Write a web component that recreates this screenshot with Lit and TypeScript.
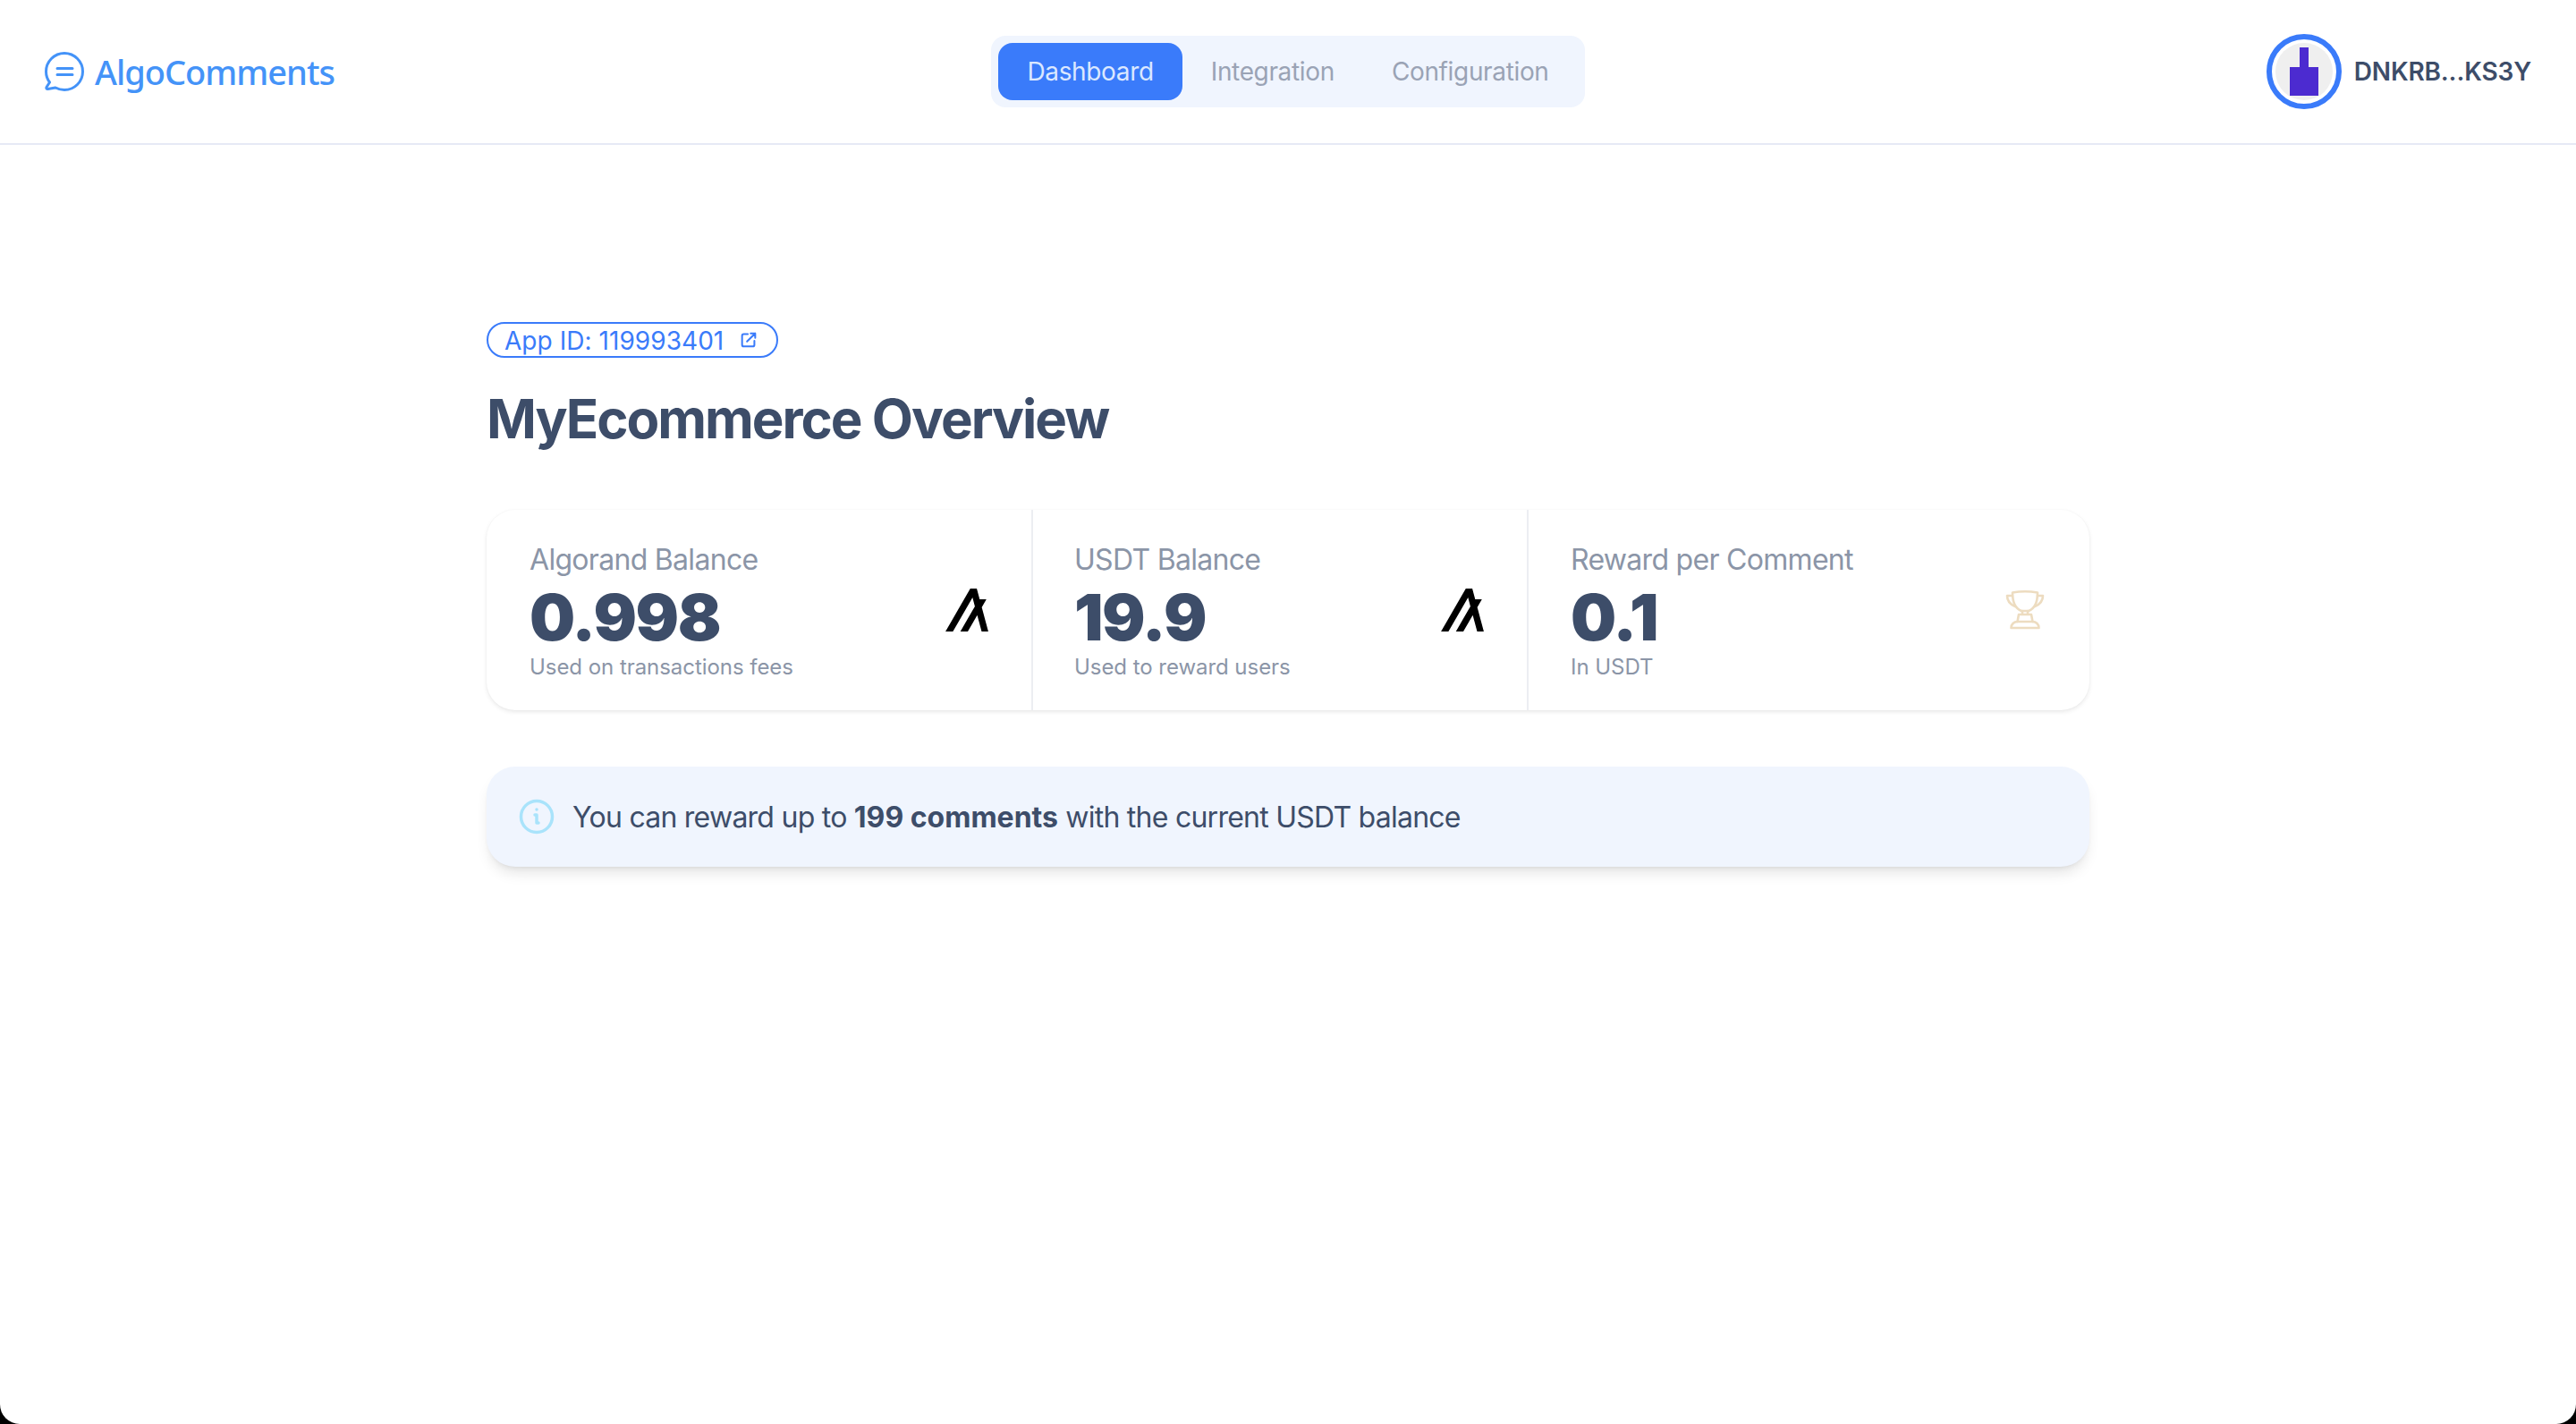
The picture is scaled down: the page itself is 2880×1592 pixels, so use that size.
import { LitElement, html, css, svg } from 'lit';
import { customElement } from 'lit/decorators.js';

const algoIcon = svg`<polygon points="19.6 113.4 36 85 52.4 56.7 68.7 28.3 71.4 23.8 72.6 28.3 77.6 47 72 56.7 55.6 85 39.3 113.4 58.9 113.4 75.3 85 83.8 70.3 87.8 85 95.4 113.4 113 113.4 105.4 85 97.8 56.7 95.8 49.4 108 28.3 90.2 28.3 89.6 26.2 83.4 3 82.6 0 65.5 0 65.1 .6 49.1 28.3 32.7 56.7 16.4 85 0 113.4 19.6 113.4"/>`;

const stats = [
  { title: 'Algorand Balance', value: '0.998', desc: 'Used on transactions fees', icon: 'algo' },
  { title: 'USDT Balance', value: '19.9', desc: 'Used to reward users', icon: 'algo' },
  { title: 'Reward per Comment', value: '0.1', desc: 'In USDT', icon: 'trophy' },
];

@customElement('app-root')
export class AppRoot extends LitElement {
  static styles = css`
    :host {
      display: block;
      background: #000;
      font-family: Inter, 'Liberation Sans', sans-serif;
      color: #3d4d69;
    }
    .page {
      background: #fff;
      min-height: 1592px;
      border-radius: 0 0 22px 22px;
      box-sizing: border-box;
    }
    header {
      height: 162px;
      box-sizing: border-box;
      border-bottom: 2px solid #e6e9f5;
      padding: 0 50px;
      display: grid;
      grid-template-columns: 1fr auto 1fr;
      align-items: center;
    }
    .logo {
      display: flex;
      align-items: center;
      gap: 12px;
      color: #4493f8;
      font-family: 'Noto Sans', sans-serif;
      font-size: 38px;
      font-weight: 500;
      letter-spacing: -1px;
    }
    .logo svg {
      width: 44px;
      height: 44px;
      display: block;
    }
    .tabs {
      display: flex;
      align-items: center;
      height: 80px;
      padding: 0 8px;
      box-sizing: border-box;
      background: #f0f5fe;
      border-radius: 16px;
      font-size: 28px;
      letter-spacing: -0.35px;
    }
    .tab {
      height: 64px;
      line-height: 64px;
      padding: 0 32px;
      color: #9aa3b5;
      border-radius: 16px;
    }
    .tab.active {
      background: #3a7bfa;
      color: #dbe8ff;
    }
    .wallet {
      justify-self: end;
      display: flex;
      align-items: center;
      gap: 14px;
      font-size: 28px;
      font-weight: 600;
      letter-spacing: -0.15px;
    }
    .avatar {
      width: 84px;
      height: 84px;
      display: block;
    }
    main {
      width: 1792px;
      margin: 0 auto;
      padding-top: 198px;
    }
    .badge {
      display: inline-flex;
      align-items: center;
      height: 40px;
      box-sizing: border-box;
      width: 326px;
      padding: 0 20px 0 18px;
      justify-content: space-between;
      border: 2px solid #3a7bfa;
      border-radius: 20px;
      color: #3a7bfa;
      font-size: 28px;
    }
    .badge span {
      padding-top: 1px;
      letter-spacing: 0.05px;
    }
    .badge svg {
      width: 22px;
      height: 22px;
      display: block;
    }
    h1 {
      margin: 24px 0 0;
      font-size: 60px;
      line-height: 88px;
      font-weight: 700;
      letter-spacing: -2px;
    }
    .stats {
      margin-top: 58px;
      display: grid;
      grid-template-columns: 609px 554px 1fr;
      border-radius: 32px;
      background: #fff;
      box-shadow: 0 2px 5px rgba(0, 0, 0, 0.09), 0 0 2px rgba(0, 0, 0, 0.03);
      overflow: hidden;
    }
    .stat {
      display: flex;
      align-items: center;
      justify-content: space-between;
      padding: 32px 48px 32px 46px;
      border-left: 2px solid #eceef2;
    }
    .stat:first-child {
      border-left: 0;
      padding-left: 48px;
    }
    .stat:last-child {
      padding-left: 47px;
    }
    .stat-title {
      font-size: 32px;
      line-height: 48px;
      color: #8b95a7;
      letter-spacing: -0.7px;
    }
    .stat-value {
      font-size: 72px;
      line-height: 80px;
      font-weight: 900;
      letter-spacing: -1.5px;
    }
    .stat-desc {
      font-size: 24px;
      line-height: 32px;
      color: #8b95a7;
      letter-spacing: -0.05px;
    }
    .figure {
      width: 48px;
      height: 48px;
      display: block;
    }
    .alert {
      margin-top: 63px;
      height: 112px;
      box-sizing: border-box;
      padding: 0 36px;
      display: flex;
      align-items: center;
      gap: 20px;
      background: #f0f5fe;
      border-radius: 32px;
      font-size: 32px;
      letter-spacing: -0.75px;
      box-shadow: 0 10px 15px -3px rgba(0, 0, 0, 0.1), 0 4px 6px -4px rgba(0, 0, 0, 0.1);
    }
    .alert svg {
      width: 40px;
      height: 40px;
      display: block;
      flex: none;
    }
    .alert b {
      font-weight: 700;
      letter-spacing: 0;
    }
  `;

  renderFigure(icon: string) {
    if (icon === 'algo') {
      return html`<svg class="figure" viewBox="0 0 113 113.4" fill="#000">${algoIcon}</svg>`;
    }
    return html`<svg class="figure" viewBox="0 0 48 48" fill="none" stroke="#eddcc0" stroke-width="2.6" stroke-linejoin="round" stroke-linecap="round">
      <path d="M10 4.5c8-1.5 20-1.5 28 0c0 5-.5 17-10 20.500h-8C10.500 21.500 10 9.500 10 4.500z"/>
      <path d="M10 8H4c0 6 4 10 9 12M38 8h6c0 6-4 10-9 12"/>
      <path d="M21 25v4h6v-4M15.500 37l1.500-8h14l1.500 8"/>
      <path d="M8.500 44c0-4 3-7 7-7h17c4 0 7 3 7 7z"/>
    </svg>`;
  }

  render() {
    return html`
      <div class="page">
        <header>
          <div class="logo">
            <svg viewBox="0 0 44 44" fill="none" stroke="#4493f8" stroke-width="3" stroke-linecap="round" stroke-linejoin="round">
              <path d="M5.500 34C3 30.700 1.500 26.500 1.500 22A20.500 20.500 0 1 1 22 42.500C18.500 42.500 15 41.600 12 40L3.500 41.500C2.200 41.700 1.500 40.700 2 39.500Z"/>
              <path d="M14 18.500h17M14 25.500h17"/>
            </svg>
            <span>AlgoComments</span>
          </div>
          <nav class="tabs">
            <div class="tab active">Dashboard</div>
            <div class="tab">Integration</div>
            <div class="tab">Configuration</div>
          </nav>
          <div class="wallet">
            <svg class="avatar" viewBox="0 0 84 84">
              <circle cx="42" cy="42" r="39" fill="#fff" stroke="#3a7bfa" stroke-width="6"/>
              <circle cx="42" cy="42" r="32" fill="#efefef"/>
              <path fill="#4c2bd0" d="M37 15h10v22h11v32H26V37h11z"/>
            </svg>
            <span>DNKRB...KS3Y</span>
          </div>
        </header>
        <main>
          <div class="badge">
            <span>App ID: 119993401</span>
            <svg viewBox="0 0 24 24" fill="none" stroke="#3a7bfa" stroke-width="2.2" stroke-linecap="round" stroke-linejoin="round">
              <path d="M11 5H6a2 2 0 0 0-2 2v11a2 2 0 0 0 2 2h11a2 2 0 0 0 2-2v-5"/>
              <path d="M10 14L20 4M14.5 4H20v5.500"/>
            </svg>
          </div>
          <h1>MyEcommerce Overview</h1>
          <section class="stats">
            ${stats.map(
              (s) => html`
                <div class="stat">
                  <div>
                    <div class="stat-title">${s.title}</div>
                    <div class="stat-value">${s.value}</div>
                    <div class="stat-desc">${s.desc}</div>
                  </div>
                  ${this.renderFigure(s.icon)}
                </div>
              `
            )}
          </section>
          <div class="alert">
            <svg viewBox="0 0 40 40" fill="none" stroke="#a9e3fb" stroke-width="3.5" stroke-linecap="round" stroke-linejoin="round">
              <circle cx="20" cy="20" r="17.500"/>
              <path d="M18 18h2v9h2"/>
              <path d="M20 12h.01"/>
            </svg>
            <span>You can reward up to <b>199 comments</b> with the current USDT balance</span>
          </div>
        </main>
      </div>
    `;
  }
}
